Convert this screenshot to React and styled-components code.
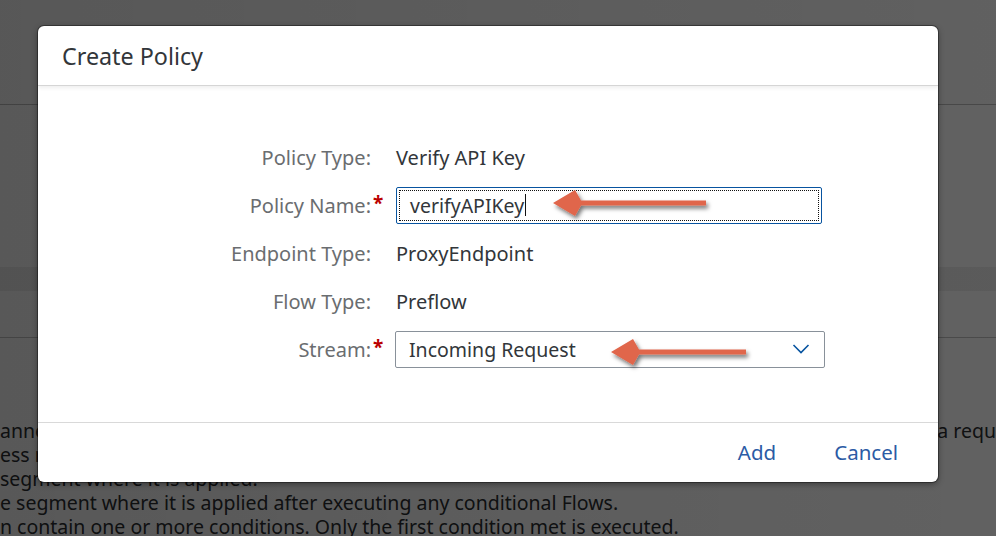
import React from "react";
import styled, { createGlobalStyle } from "styled-components";

const Global = createGlobalStyle`
  html, body { margin: 0; padding: 0; }
  body {
    width: 996px; height: 536px; overflow: hidden;
    font-family: "Noto Sans", "Open Sans", Arial, sans-serif;
    background: #ffffff;
  }
`;

const Page = styled.div`
  position: relative;
  width: 996px;
  height: 536px;
  overflow: hidden;
  background: #fff;
`;

const PageHeader = styled.div`
  height: 104px;
  border-bottom: 1px solid #bdbdbd;
  background: #fdfdfd;
`;

const PageSection = styled.div`
  height: ${(p) => p.$h}px;
  background: ${(p) => p.$bg || "#fff"};
  border-bottom: ${(p) => (p.$line ? "1px solid #c4c4c4" : "none")};
`;

const PageText = styled.div`
  padding-top: 1px;
  font-size: 19.5px;
  line-height: 24px;
  color: #2a2d30;
  white-space: nowrap;
`;

const TextLine = styled.div`
  display: flex;
  justify-content: space-between;
  height: 24px;
  line-height: 24px;
`;

const Dim = styled.div`
  position: absolute;
  inset: 0;
  background: linear-gradient(90deg, rgba(0,0,0,0.655), rgba(0,0,0,0.62));
`;

const Dialog = styled.div`
  position: absolute;
  left: 38px;
  top: 26px;
  width: 900px;
  height: 456px;
  background: #fff;
  border-radius: 6px;
  box-shadow: 0 0 0 1px rgba(0,0,0,0.35), 0 2px 6px rgba(0,0,0,0.4);
  display: flex;
  flex-direction: column;
  overflow: hidden;
`;

const Header = styled.div`
  position: relative;
  height: 59px;
  flex: none;
  display: flex;
  align-items: center;
  padding-left: 24px;
  border-bottom: 1px solid #d5d5d5;
  box-shadow: 0 2px 4px rgba(0,0,0,0.07);
`;

const Title = styled.h1`
  margin: 0;
  font-size: 23.3px;
  font-weight: 400;
  color: #32363a;
`;

const Body = styled.div`
  flex: 1;
  padding: 47px 0 0;
`;

const Form = styled.div`
  display: grid;
  grid-template-columns: 333px 13px 430px;
  column-gap: 0;
  grid-auto-rows: 48px;
  align-items: center;
`;

const Label = styled.div`
  text-align: right;
  font-size: 20px;
  color: #6a6d70;
`;

const Req = styled.span`
  align-self: center;
  padding-left: 2px;
  color: #bb0000;
  font-size: 19px;
  font-weight: 700;
  line-height: 1;
  margin-top: -4px;
`;

const Value = styled.div`
  padding-left: 12px;
  font-size: 20px;
  color: #32363a;
`;

const Field = styled.div`
  margin-left: ${(p) => p.$ml}px;
  height: 37px;
  box-sizing: border-box;
  border: 1px solid ${(p) => (p.$focused ? "#0854a0" : "#89919a")};
  border-radius: 2px;
  width: ${(p) => p.$w}px;
  display: flex;
  align-items: center;
  position: relative;
  padding: 0 14px 0 13px;
  font-size: 19.5px;
  color: #32363a;
  ${(p) =>
    p.$focused &&
    `&::after{content:"";position:absolute;inset:2px;border:1px dotted #111;pointer-events:none;}`}
`;

const Caret = styled.span`
  display: inline-block;
  width: 1px;
  height: 22px;
  background: #111;
  margin-left: 1px;
`;

const Grow = styled.span`
  flex: 1;
`;

const Footer = styled.div`
  height: 57px;
  flex: none;
  border-top: 1px solid #d9d9d9;
  display: flex;
  align-items: center;
  justify-content: flex-end;
  padding: 0 30px 2px 0;
  gap: 38px;
`;

const TextButton = styled.button`
  background: none;
  border: none;
  padding: 0 10px;
  font-family: inherit;
  font-size: 20.5px;
  color: #2b5ba5;
  cursor: pointer;
`;

const Annot = styled.svg`
  position: absolute;
  left: 0;
  top: 0;
  pointer-events: none;
`;

const Arrow = ({ x1, x2, y }) => (
  <g filter="url(#sh)">
    <path d={`M${x2} ${y - 2.5} L${x1 + 28} ${y - 2.5} L${x1 + 22} ${y - 13} L${x1} ${y} L${x1 + 22} ${y + 13} L${x1 + 28} ${y + 2.5} L${x2} ${y + 2.5} Z`} fill="#e0664c" strokeLinejoin="round" />
  </g>
);

export default function App() {
  return (
    <>
      <Global />
      <Page>
        <PageHeader />
        <PageSection $h={162} />
        <PageSection $h={24} $bg="#eeeeee" />
        <PageSection $h={46} $line />
        <PageSection $h={80} />
        <PageText>
          <TextLine>
            <span>anne</span>
            <span>a requ</span>
          </TextLine>
          <TextLine>
            <span>ess r</span>
          </TextLine>
          <TextLine>
            <span>segment where it is applied.</span>
          </TextLine>
          <TextLine>
            <span>e segment where it is applied after executing any conditional Flows.</span>
          </TextLine>
          <TextLine>
            <span>n contain one or more conditions. Only the first condition met is executed.</span>
          </TextLine>
        </PageText>
        <Dim />
        <Dialog>
          <Header>
            <Title>Create Policy</Title>
          </Header>
          <Body>
            <Form>
              <Label>Policy Type:</Label>
              <span />
              <Value>Verify API Key</Value>

              <Label>Policy Name:</Label>
              <Req>*</Req>
              <Field $focused $w={426} $ml={12}>
                verifyAPIKey
                <Caret />
              </Field>

              <Label>Endpoint Type:</Label>
              <span />
              <Value>ProxyEndpoint</Value>

              <Label>Flow Type:</Label>
              <span />
              <Value>Preflow</Value>

              <Label>Stream:</Label>
              <Req>*</Req>
              <Field $w={430} $ml={11}>
                Incoming Request
                <Grow />
                <svg width="18" height="12" viewBox="0 0 18 12">
                  <path d="M1.5 2 L9 9.5 L16.5 2" fill="none" stroke="#0854a0" strokeWidth="1.6" />
                </svg>
              </Field>
            </Form>
          </Body>
          <Footer>
            <TextButton>Add</TextButton>
            <TextButton>Cancel</TextButton>
          </Footer>
        </Dialog>
        <Annot width="996" height="536">
          <defs>
            <filter id="sh" x="-20%" y="-100%" width="140%" height="300%">
              <feDropShadow dx="2" dy="3" stdDeviation="2" floodColor="#000" floodOpacity="0.55" />
            </filter>
          </defs>
          <Arrow x1={553} x2={706} y={203} />
          <Arrow x1={611} x2={746} y={352} />
        </Annot>
      </Page>
    </>
  );
}
